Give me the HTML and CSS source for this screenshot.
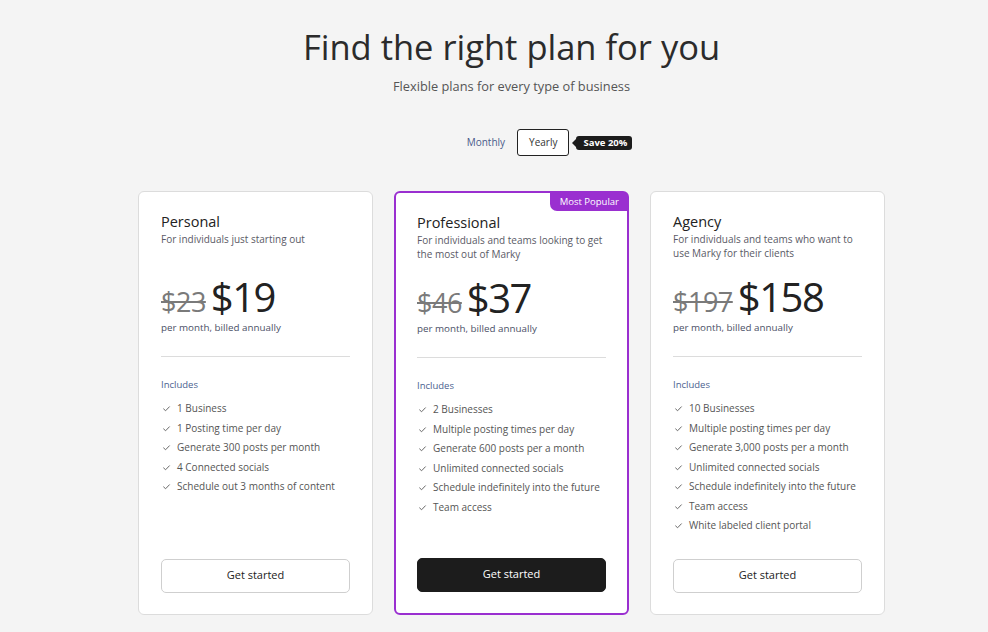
FILE: index.html
```html
<!DOCTYPE html>
<html lang="en">
<head>
    <meta charset="UTF-8">
    <meta name="viewport" content="width=device-width, initial-scale=1.0">
    <title>Pricing</title>
    <link rel="stylesheet" href="styles.css">
</head>
<body>
    <div class="container">
        <h1>Find the right plan for you</h1>
        <p class="subtitle">Flexible plans for every type of business</p>

        <div class="toggle">
            <span class="toggle-option">Monthly</span>
            <span class="toggle-option active">Yearly</span>
            <span class="save">Save 20%</span>
        </div>

        <div class="plans">
            <div class="plan">
                <h2>Personal</h2>
                <p class="plan-desc">For individuals just starting out</p>
                <div class="price">
                    <span class="old">$23</span>
                    <span class="new">$19</span>
                </div>
                <p class="billing">per month, billed annually</p>
                <hr>
                <p class="includes">Includes</p>
                <ul class="features">
                    <li><svg viewBox="0 0 10 10"><path d="M1.5 5.2 L4 7.5 L8.5 2.8"/></svg>1 Business</li>
                    <li><svg viewBox="0 0 10 10"><path d="M1.5 5.2 L4 7.5 L8.5 2.8"/></svg>1 Posting time per day</li>
                    <li><svg viewBox="0 0 10 10"><path d="M1.5 5.2 L4 7.5 L8.5 2.8"/></svg>Generate 300 posts per month</li>
                    <li><svg viewBox="0 0 10 10"><path d="M1.5 5.2 L4 7.5 L8.5 2.8"/></svg>4 Connected socials</li>
                    <li><svg viewBox="0 0 10 10"><path d="M1.5 5.2 L4 7.5 L8.5 2.8"/></svg>Schedule out 3 months of content</li>
                </ul>
                <button class="btn">Get started</button>
            </div>

            <div class="plan popular">
                <span class="badge">Most Popular</span>
                <h2>Professional</h2>
                <p class="plan-desc">For individuals and teams looking to get the most out of Marky</p>
                <div class="price">
                    <span class="old">$46</span>
                    <span class="new">$37</span>
                </div>
                <p class="billing">per month, billed annually</p>
                <hr>
                <p class="includes">Includes</p>
                <ul class="features">
                    <li><svg viewBox="0 0 10 10"><path d="M1.5 5.2 L4 7.5 L8.5 2.8"/></svg>2 Businesses</li>
                    <li><svg viewBox="0 0 10 10"><path d="M1.5 5.2 L4 7.5 L8.5 2.8"/></svg>Multiple posting times per day</li>
                    <li><svg viewBox="0 0 10 10"><path d="M1.5 5.2 L4 7.5 L8.5 2.8"/></svg>Generate 600 posts per a month</li>
                    <li><svg viewBox="0 0 10 10"><path d="M1.5 5.2 L4 7.5 L8.5 2.8"/></svg>Unlimited connected socials</li>
                    <li><svg viewBox="0 0 10 10"><path d="M1.5 5.2 L4 7.5 L8.5 2.8"/></svg>Schedule indefinitely into the future</li>
                    <li><svg viewBox="0 0 10 10"><path d="M1.5 5.2 L4 7.5 L8.5 2.8"/></svg>Team access</li>
                </ul>
                <button class="btn dark">Get started</button>
            </div>

            <div class="plan">
                <h2>Agency</h2>
                <p class="plan-desc">For individuals and teams who want to use Marky for their clients</p>
                <div class="price">
                    <span class="old">$197</span>
                    <span class="new">$158</span>
                </div>
                <p class="billing">per month, billed annually</p>
                <hr>
                <p class="includes">Includes</p>
                <ul class="features">
                    <li><svg viewBox="0 0 10 10"><path d="M1.5 5.2 L4 7.5 L8.5 2.8"/></svg>10 Businesses</li>
                    <li><svg viewBox="0 0 10 10"><path d="M1.5 5.2 L4 7.5 L8.5 2.8"/></svg>Multiple posting times per day</li>
                    <li><svg viewBox="0 0 10 10"><path d="M1.5 5.2 L4 7.5 L8.5 2.8"/></svg>Generate 3,000 posts per a month</li>
                    <li><svg viewBox="0 0 10 10"><path d="M1.5 5.2 L4 7.5 L8.5 2.8"/></svg>Unlimited connected socials</li>
                    <li><svg viewBox="0 0 10 10"><path d="M1.5 5.2 L4 7.5 L8.5 2.8"/></svg>Schedule indefinitely into the future</li>
                    <li><svg viewBox="0 0 10 10"><path d="M1.5 5.2 L4 7.5 L8.5 2.8"/></svg>Team access</li>
                    <li><svg viewBox="0 0 10 10"><path d="M1.5 5.2 L4 7.5 L8.5 2.8"/></svg>White labeled client portal</li>
                </ul>
                <button class="btn">Get started</button>
            </div>
        </div>
    </div>
</body>
</html>
```

FILE: styles.css
```css
body, html {
    margin: 0;
    background-color: #f4f4f4;
    font-family: 'Open Sans', sans-serif;
    color: #2b2b2b;
}
.container {
    width: 747px;
    margin-left: 138px;
    padding-top: 25px;
    text-align: center;
}
h1 {
    margin: 0;
    font-size: 34.5px;
    line-height: 44px;
    font-weight: 400;
    color: #2b2b2b;
}
.subtitle {
    margin: 8px 0 0;
    font-size: 12.8px;
    line-height: 18px;
    color: #555;
}
.toggle {
    display: flex;
    justify-content: center;
    align-items: center;
    margin-top: 34px;
    padding-left: 64px;
}
.toggle-option {
    font-size: 10px;
    color: #4a5a8a;
    padding: 0 11px;
    line-height: 25px;
    border: 1px solid transparent;
    border-radius: 3px;
}
.toggle-option.active {
    border-color: #222;
    color: #333;
    background-color: #fff;
}
.save {
    position: relative;
    margin-left: 7px;
    background-color: #1c1c1c;
    color: #fff;
    font-size: 9.5px;
    font-weight: 700;
    line-height: 14px;
    padding: 0 5px 0 7px;
    border-radius: 3px;
}
.save::before {
    content: "";
    position: absolute;
    left: -4px;
    top: 3px;
    border-style: solid;
    border-width: 4px 4px 4px 0;
    border-color: transparent #1c1c1c transparent transparent;
}
.plans {
    display: flex;
    gap: 21px;
    margin-top: 35px;
    text-align: left;
}
.plan {
    position: relative;
    box-sizing: border-box;
    width: 235px;
    height: 424px;
    background-color: #fff;
    border: 1px solid #dcdcdc;
    border-radius: 6px;
    padding: 20px 22px 21px;
    display: flex;
    flex-direction: column;
}
.plan.popular {
    border: 2px solid #9a2fd0;
    padding: 20px 21px 20px;
}
.badge {
    position: absolute;
    top: -1px;
    right: -1px;
    background-color: #9a2fd0;
    color: #fff;
    font-size: 9.5px;
    line-height: 19px;
    padding: 0 9px 0 10px;
    border-radius: 0 5px 0 7px;
}
h2 {
    margin: 0;
    font-size: 14.5px;
    line-height: 20px;
    font-weight: 500;
    color: #222;
}
.plan-desc {
    margin: 0;
    min-height: 28px;
    font-size: 10px;
    line-height: 14px;
    color: #5a5a66;
}
.price {
    display: flex;
    align-items: baseline;
    gap: 5px;
    margin-top: 17px;
    height: 44px;
    line-height: 40px;
}
.old {
    font-size: 27px;
    color: #7a7a7a;
    text-decoration: line-through;
    text-decoration-thickness: 1.5px;
    letter-spacing: -0.5px;
}
.new {
    font-size: 40px;
    font-weight: 500;
    color: #222;
    letter-spacing: -1.5px;
}
.billing {
    margin: 0;
    font-size: 9.8px;
    line-height: 14px;
    color: #4a4f66;
}
hr {
    border: none;
    border-top: 1px solid #dcdcdc;
    margin: 21px 0 0;
}
.includes {
    margin: 21px 0 0;
    font-size: 9.5px;
    line-height: 14px;
    color: #4b5f8f;
}
.features {
    list-style: none;
    margin: 7px 0 0;
    padding: 0;
}
.features li {
    display: flex;
    align-items: center;
    font-size: 10px;
    line-height: 19.5px;
    color: #555;
}
.features svg {
    width: 9px;
    height: 9px;
    margin: 0 6px 0 1px;
    fill: none;
    stroke: #666;
    stroke-width: 1.1;
}
.btn {
    margin-top: auto;
    height: 34px;
    padding: 0 0 3px;
    border: 1px solid #cfcfcf;
    border-radius: 5px;
    background-color: #fff;
    font-family: inherit;
    font-size: 11px;
    color: #222;
    cursor: pointer;
}
.btn.dark {
    background-color: #1c1c1c;
    border-color: #1c1c1c;
    color: #fff;
    margin-bottom: 1px;
}
```
